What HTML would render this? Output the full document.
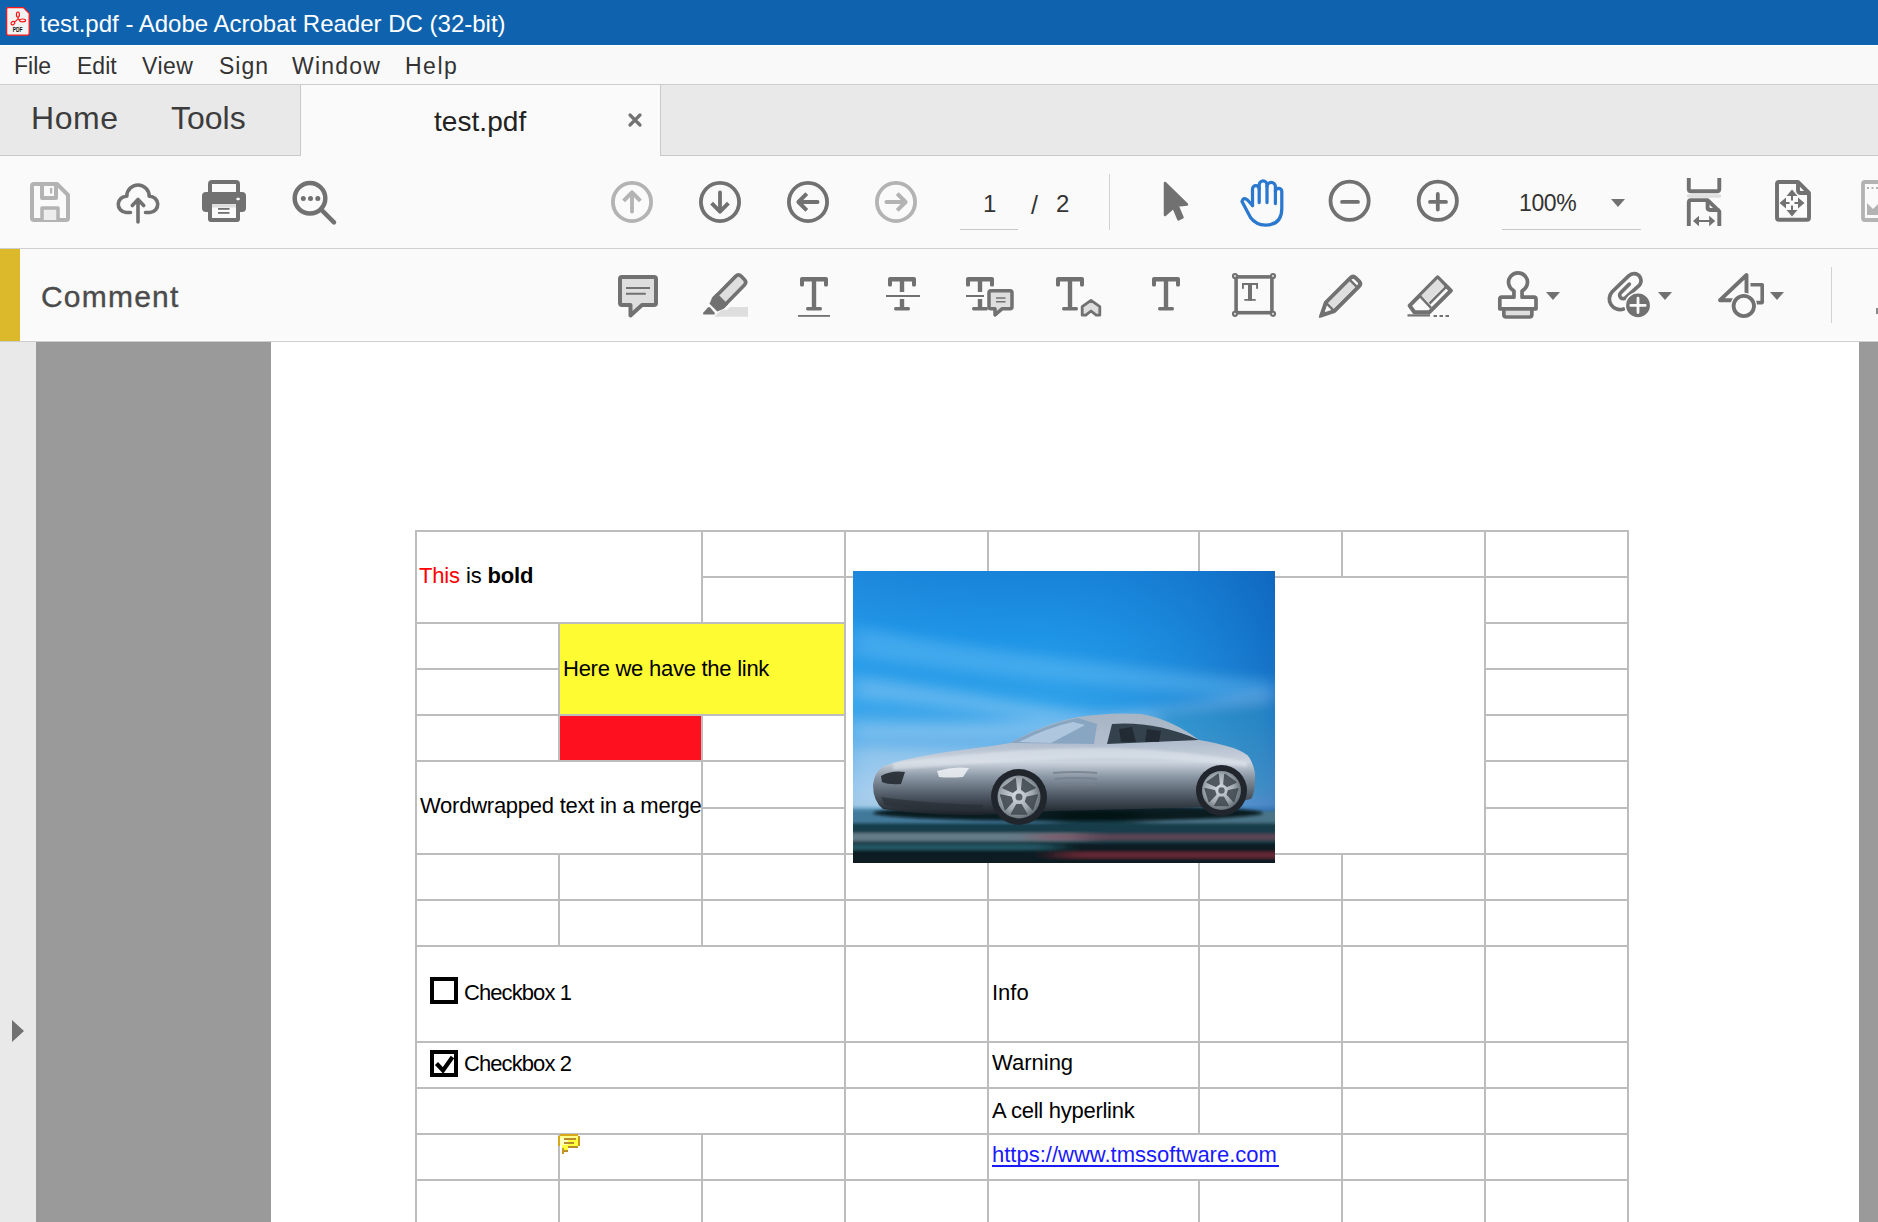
<!DOCTYPE html>
<html><head><meta charset="utf-8"><title>test.pdf - Adobe Acrobat Reader DC</title>
<style>
*{margin:0;padding:0;box-sizing:border-box}
html,body{width:1878px;height:1222px;overflow:hidden;background:#fafafa;font-family:"Liberation Sans",sans-serif}
.a{position:absolute}
.t{position:absolute;white-space:nowrap;line-height:1}
svg{position:absolute;overflow:visible}
.g{position:absolute;background:#bdbdbd}
</style></head><body>
<!-- title bar -->
<div class="a" style="left:0;top:0;width:1878px;height:45px;background:#0f63ae"></div>
<div class="a" style="left:0;top:45px;width:1878px;height:1px;background:#ffffff"></div>
<svg style="left:0;top:0" width="40" height="45">
<path d="M8.2 7.6 H23.4 L29.2 13.4 V33.4 Q29.2 35.2 27.4 35.2 H8.2 Q6.6 35.2 6.6 33.6 V9.2 Q6.6 7.6 8.2 7.6 Z" fill="#f3f3f3" stroke="#ff1616" stroke-width="1.3"/>
<g fill="none" stroke="#ff1010" stroke-width="1.15">
<ellipse cx="17.9" cy="14.6" rx="1.5" ry="2.6"/>
<ellipse cx="22.6" cy="20.4" rx="3" ry="1.4"/>
<ellipse cx="12.9" cy="23.1" rx="2" ry="1.6" transform="rotate(-30 12.9 23.1)"/>
<path d="M18 17.2 Q17.6 19.5 19.6 20.2 M17.6 19.4 Q16 21 14.3 22"/>
</g>
<text x="12.8" y="31.9" font-family="Liberation Sans" font-weight="bold" font-size="6.6" fill="#111" textLength="9.8" lengthAdjust="spacingAndGlyphs">PDF</text>
</svg>
<div id="title" class="t" style="left:40px;top:11.5px;font-size:24px;color:#fff">test.pdf - Adobe Acrobat Reader DC (32-bit)</div>
<!-- menu bar -->
<div class="a" style="left:0;top:46px;width:1878px;height:38px;background:#f9f9f9"></div>
<div class="a" style="left:0;top:84px;width:1878px;height:1px;background:#cdcdcd"></div>
<div id="m1" class="t" style="left:14px;top:55px;font-size:23px;color:#333">File</div>
<div id="m2" class="t" style="left:77px;top:55px;font-size:23px;color:#333">Edit</div>
<div id="m3" class="t" style="left:142px;top:55px;font-size:23px;color:#333;letter-spacing:0.5px">View</div>
<div id="m4" class="t" style="left:219px;top:55px;font-size:23px;color:#333;letter-spacing:1px">Sign</div>
<div id="m5" class="t" style="left:292px;top:55px;font-size:23px;color:#333;letter-spacing:1.2px">Window</div>
<div id="m6" class="t" style="left:405px;top:55px;font-size:23px;color:#333;letter-spacing:1.5px">Help</div>
<!-- tab bar -->
<div class="a" style="left:0;top:85px;width:1878px;height:70px;background:#e9e9e9"></div>
<div class="a" style="left:0;top:155px;width:1878px;height:1px;background:#c9c9c9"></div>
<div class="a" style="left:300px;top:85px;width:1px;height:71px;background:#c9c9c9"></div>
<div class="a" style="left:660px;top:85px;width:1px;height:71px;background:#c9c9c9"></div>
<div class="a" style="left:301px;top:85px;width:359px;height:71px;background:#fafafa"></div>
<div id="tab1" class="t" style="left:31px;top:102px;font-size:32px;letter-spacing:0.6px;color:#3c3c3c">Home</div>
<div id="tab2" class="t" style="left:171px;top:102px;font-size:32px;color:#3c3c3c">Tools</div>
<div id="tab3" class="t" style="left:434px;top:108px;font-size:28px;letter-spacing:0.05px;color:#222">test.pdf</div>
<!-- toolbar -->
<div class="a" style="left:0;top:156px;width:1878px;height:92px;background:#fafafa"></div>
<div class="a" style="left:0;top:248px;width:1878px;height:1px;background:#cfcfcf"></div>
<!-- comment bar -->
<div class="a" style="left:0;top:249px;width:1878px;height:91px;background:#fafafa"></div>
<div class="a" style="left:0;top:249px;width:20px;height:92px;background:#dcb92b"></div>
<div class="a" style="left:20px;top:340px;width:1858px;height:1px;background:#ffffff"></div>
<div class="a" style="left:0;top:341px;width:1878px;height:1px;background:#cdcdcd"></div>
<div id="comment" class="t" style="left:41px;top:281.5px;font-size:30px;color:#4b4b4b;letter-spacing:1.2px;-webkit-text-stroke:0.35px #4b4b4b">Comment</div>
<svg style="left:0;top:0" width="1878" height="342" viewBox="0 0 1878 342">
<defs>
<path id="T" d="M0 2 Q0 0 2 0 H26 Q28 0 28 2 V8 Q28 9.6 26.5 9.6 H25.5 Q24 9.6 24 8 V4.5 H16.2 V30 H20.5 Q22 30 22 31.8 Q22 33.6 20.5 33.6 H7.5 Q6 33.6 6 31.8 Q6 30 7.5 30 H11.8 V4.5 H4 V8 Q4 9.6 2.5 9.6 H1.5 Q0 9.6 0 8 Z"/>
</defs>
<!-- save (disabled) -->
<g fill="none" stroke="#b3b3b3" stroke-width="4" stroke-linejoin="round">
<path d="M34 184 H57 L68 195 V218 Q68 220 66 220 H34 Q32 220 32 218 V186 Q32 184 34 184 Z"/>
<path d="M42 184 V198 H56 V184"/>
<path d="M42 220 V208 H58 V220" fill="#ededed" stroke-width="3.5"/>
</g>
<rect x="50" y="188" width="2.2" height="5.5" fill="#b3b3b3"/>
<!-- cloud upload -->
<g fill="none" stroke="#717171" stroke-width="3.6" stroke-linecap="round" stroke-linejoin="round">
<path d="M130.5 212.5 H126 A8 8 0 0 1 126.8 196.2 A11.2 11.2 0 0 1 149.2 196.2 A8 8 0 0 1 150 212.5 H145.5"/>
<path d="M138 222 V199.5 M132.3 205.5 L138 199.5 L143.7 205.5"/>
</g>
<!-- printer -->
<g fill="#717171">
<rect x="210" y="182" width="28" height="15" rx="2" fill="none" stroke="#717171" stroke-width="4"/>
<rect x="202" y="192" width="44" height="20" rx="4"/>
<rect x="208" y="203.5" width="32" height="18.5" rx="3"/>
<rect x="212" y="204" width="24" height="14" fill="#fafafa"/>
<rect x="212" y="204" width="24" height="3.5" fill="#dedede"/>
<rect x="218" y="208" width="11.5" height="1.8"/>
<rect x="218" y="212" width="11.5" height="1.8"/>
<rect x="236.4" y="197.8" width="3.4" height="2.4" rx="1" fill="#fafafa"/>
</g>
<!-- search -->
<g fill="none" stroke="#717171" stroke-width="4.5" stroke-linecap="round">
<circle cx="310" cy="198.3" r="15.3"/>
<path d="M322.5 210.8 L334 222.3"/>
</g>
<g fill="#717171"><circle cx="303.3" cy="198.4" r="2.5"/><circle cx="310.5" cy="198.4" r="2.5"/><circle cx="317.8" cy="198.4" r="2.5"/></g>
<!-- nav circles -->
<g fill="none" stroke-width="3.8">
<g stroke="#b3b3b3"><circle cx="632" cy="202" r="19.1"/><path d="M632 211.6 V194" stroke-linecap="round"/><path d="M623.6 200.8 L632 192.4 L640.4 200.8" stroke-width="4" stroke-linejoin="round"/></g>
<g stroke="#717171"><circle cx="720" cy="202" r="19.1"/><path d="M720 192.4 V210" stroke-linecap="round"/><path d="M711.6 203.2 L720 211.6 L728.4 203.2" stroke-width="4" stroke-linejoin="round"/></g>
<g stroke="#717171"><circle cx="808" cy="202" r="19.1"/><path d="M817.6 202 H800" stroke-linecap="round"/><path d="M806.8 193.6 L798.4 202 L806.8 210.4" stroke-width="4" stroke-linejoin="round"/></g>
<g stroke="#b3b3b3"><circle cx="896" cy="202" r="19.1"/><path d="M886.4 202 H904" stroke-linecap="round"/><path d="M897.2 193.6 L905.6 202 L897.2 210.4" stroke-width="4" stroke-linejoin="round"/></g>
</g>
<rect x="960" y="229" width="58" height="1" fill="#c8c8c8"/>
<rect x="1109" y="174" width="1" height="56" fill="#d2d2d2"/>
<!-- select arrow -->
<path d="M1165 183 L1187 204.5 L1177.5 205.5 L1182.5 217.5 L1178.5 219.5 L1173.5 207.5 L1165 215 Z" fill="#717171" stroke="#717171" stroke-width="2.5" stroke-linejoin="round"/>
<!-- hand -->
<g fill="none" stroke="#2b78cf" stroke-width="3.25" stroke-linecap="round" stroke-linejoin="round">
<path d="M1252.5 205.5 L1247.5 200 Q1243.5 196.5 1242 201.5 L1250.5 217.5 Q1256 225 1265.5 225 Q1281.8 225 1281.8 208.5 V191.5 A3.2 3.2 0 0 0 1275.4 191.5"/>
<path d="M1252.5 205.5 V189 A3.35 3.35 0 0 1 1259.2 189 V202.5"/>
<path d="M1259.2 189 V184.8 A3.9 3.9 0 0 1 1267 184.8 V202.5"/>
<path d="M1267 186.5 A4.2 4.2 0 0 1 1275.4 186.5 V203.5"/>
</g>
<!-- zoom out / in -->
<g fill="none" stroke="#717171" stroke-width="3.8" stroke-linecap="round">
<circle cx="1349.6" cy="200.8" r="19.1"/><path d="M1342 201.9 H1358"/>
<circle cx="1437.8" cy="200.8" r="19.1"/><path d="M1430 201.9 H1446 M1437.8 194 V209.6"/>
</g>
<path d="M1611 199 H1625 L1618 207 Z" fill="#717171"/>
<rect x="1502" y="229" width="139" height="1" fill="#c8c8c8"/>
<!-- fit width -->
<g fill="none" stroke="#717171" stroke-width="3.9">
<path d="M1688.8 178 V189 Q1688.8 191.3 1691 191.3 H1717 Q1719.3 191.3 1719.3 189 V178"/>
<path d="M1688.8 226 V202.5 Q1688.8 200.1 1691 200.1 H1707.6 L1719.3 211.3 V226" stroke-linejoin="round"/>
<path d="M1707.6 200.1 V207.6 Q1707.6 210 1710 210 H1719.3"/>
<path d="M1697 221 H1711" stroke-width="2"/>
</g>
<rect x="1686.8" y="194.3" width="34.4" height="3.4" rx="1.7" fill="#dedede"/>
<path d="M1693 221 L1699 215.8 V226.2 Z M1715.2 221 L1709.2 215.8 V226.2 Z" fill="#717171"/>
<!-- fit page -->
<g fill="none" stroke="#717171" stroke-width="3.9" stroke-linejoin="round">
<path d="M1779 182 H1798 L1809 193 V217.7 Q1809 219.7 1807 219.7 H1779 Q1777 219.7 1777 217.7 V184 Q1777 182 1779 182 Z"/>
<path d="M1798 182 V190 Q1798 193 1801 193 H1809"/>
<path d="M1792 195 V200.5 M1792 205.5 V211 M1785 203 H1789.5 M1794.5 203 H1799" stroke-width="2"/>
</g>
<path d="M1792 189.5 L1786.5 196 H1797.5 Z M1792 216.5 L1786.5 210 H1797.5 Z M1779.5 203 L1786 197.5 V208.5 Z M1804.5 203 L1798 197.5 V208.5 Z" fill="#717171"/>
<!-- partial icon -->
<g fill="none" stroke="#b3b3b3" stroke-width="3.8"><path d="M1880 182 H1865 Q1863 182 1863 184 V218 Q1863 220 1865 220 H1880"/></g>
<path d="M1867 187 h2 v2 h-2z M1871.5 187 h2 v2 h-2z M1876 187 h2 v2 h-2z" fill="#b3b3b3"/>
<path d="M1867 203 L1873 209 L1878 204 V215 H1867 Z" fill="#b3b3b3"/>

<!-- ===== comment toolbar ===== -->
<!-- sticky note -->
<path d="M622 277 H654 Q656 277 656 279 V303 Q656 305 654 305 H642 L630.5 315.5 V305 H622 Q620 305 620 303 V279 Q620 277 622 277 Z" fill="#dedede" stroke="#717171" stroke-width="4" stroke-linejoin="round"/>
<path d="M626 288 H650 M626 293.8 H645.8" stroke="#717171" stroke-width="2"/>
<!-- highlighter -->
<path d="M714.2 316.8 L721.8 309.8 H727.2 L730 307 H748 V316.8 Z" fill="#dedede"/>
<g transform="translate(728.75 292.15) rotate(-45.4)">
<path d="M-13.2 -6.2 H16.05 Q20.05 -6.2 20.05 -2.2 V2.2 Q20.05 6.2 16.05 6.2 H-13.2 Z" fill="#dedede" stroke="#717171" stroke-width="3.6"/>
<path d="M-9 -8 V8 H-15.5 L-21.85 5.5 V-5.5 L-15.5 -8 Z" fill="#717171"/>
</g>
<path d="M704.2 314.6 Q702.4 314.6 703.4 312.6 L707.6 307.8 Q709 306.4 710.4 307.8 L714.4 312.4 Q715.6 314.6 713.4 314.6 Z" fill="#717171"/>
<!-- T underline -->
<g fill="#717171">
<use href="#T" x="800" y="277"/>
<rect x="798" y="315" width="32" height="1.8"/>
<!-- T strike -->
<use href="#T" x="888" y="277"/>
</g>
<rect x="880" y="292" width="40" height="7" fill="#fafafa"/>
<rect x="886" y="295" width="34" height="2" fill="#717171"/>
<!-- T replace -->
<use href="#T" x="966" y="277" fill="#717171"/>
<rect x="960" y="292" width="26" height="7" fill="#fafafa"/>
<rect x="966" y="295" width="18" height="2" fill="#717171"/>
<path d="M991 290.8 H1010 Q1012 290.8 1012 292.8 V306.8 Q1012 308.8 1010 308.8 H1002 L995 314.8 V308.8 H991 Q989 308.8 989 306.8 V292.8 Q989 290.8 991 290.8 Z" fill="#dedede" stroke="#717171" stroke-width="3.5" stroke-linejoin="round"/>
<path d="M996 298 H1005.5 M996 301.8 H1005.5" stroke="#717171" stroke-width="1.6"/>
<!-- T insert -->
<use href="#T" x="1056" y="277" fill="#717171"/>
<path d="M1082.2 315.2 V306.6 L1091 300.4 L1099.8 306.6 V315.2 H1096.2 L1091 311 L1085.8 315.2 Z" fill="#dedede" stroke="#717171" stroke-width="2.8" stroke-linejoin="round"/>
<!-- T plain -->
<use href="#T" x="1152" y="277" fill="#717171"/>
<!-- text box -->
<rect x="1236.1" y="276.9" width="35.8" height="35.8" fill="none" stroke="#717171" stroke-width="3.6"/>
<g fill="#dedede" stroke="#717171" stroke-width="2">
<circle cx="1235" cy="276" r="2.1"/><circle cx="1273" cy="276" r="2.1"/><circle cx="1235" cy="313.8" r="2.1"/><circle cx="1273" cy="313.8" r="2.1"/>
</g>
<g fill="#717171">
<rect x="1242" y="283.1" width="16" height="2" rx="0.6"/>
<rect x="1242" y="283.1" width="1.9" height="5.7"/>
<rect x="1256.1" y="283.1" width="1.9" height="5.7"/>
<rect x="1248" y="283.1" width="4" height="17.6"/>
<rect x="1244.2" y="298.9" width="11.6" height="1.9" rx="0.6"/>
</g>
<!-- pencil -->
<g transform="translate(1339.2 297.6) rotate(-45)">
<path d="M-13 -6 H22 Q25.6 -6 25.6 -2.4 V2.4 Q25.6 6 22 6 H-13 L-25.2 0 Z" fill="#fafafa" stroke="#717171" stroke-width="4" stroke-linejoin="round"/>
<rect x="-13" y="-4" width="33" height="8" fill="#dedede"/>
<path d="M-13 -6 V6 M20 -6 V6" stroke="#717171" stroke-width="2.4"/>
<path d="M-21 -2.2 L-27.4 0 L-21 2.2 Z" fill="#717171" stroke="#717171" stroke-width="2" stroke-linejoin="round"/>
</g>
<!-- eraser -->
<path d="M1437.6 277.4 L1450.9 290.6 L1429.4 312.2 H1414.4 L1409.6 305.6 Z" fill="#fafafa" stroke="#717171" stroke-width="4" stroke-linejoin="round"/>
<path d="M1421.2 295.4 L1437.6 279 L1444.2 286.1 L1428.3 302 Z" fill="#dedede"/>
<path d="M1420.3 296.3 L1431 307.8 M1429.5 303.5 L1446.3 286.7" stroke="#717171" stroke-width="2.5"/>
<path d="M1407.5 315.4 H1430" stroke="#717171" stroke-width="2.2"/>
<path d="M1433.6 316 H1437 M1439.5 316 H1443 M1445.5 316 H1449" stroke="#717171" stroke-width="1.9"/>
<!-- stamp -->
<rect x="1505.7" y="310.6" width="24.3" height="4.5" fill="#dedede"/>
<g fill="none" stroke="#717171" stroke-width="3.7" stroke-linejoin="round">
<path d="M1513.95 297.2 V290.8 A9.45 9.45 0 1 1 1522.05 290.8 V297.2 H1534 Q1536 297.2 1536 299.2 V308.8 H1499.8 V299.2 Q1499.8 297.2 1501.8 297.2 Z"/>
<path d="M1503.85 308.8 V314.5 Q1503.85 317 1506.35 317 H1529.35 Q1531.85 317 1531.85 314.5 V308.8"/>
</g>
<path d="M1546 292 H1560 L1553 300 Z" fill="#717171"/>
<!-- attach -->
<path d="M1623.6 308.9 A10.6 10.6 0 0 1 1612.2 291.7 L1628.9 275.7 A7.1 7.1 0 0 1 1633.9 273.6 A7.1 7.1 0 0 1 1638.9 285.7 L1625.7 297.7 A3.5 3.5 0 0 1 1620.73 297.67 A3.5 3.5 0 0 1 1620.7 292.7 L1629.3 284.1" fill="none" stroke="#717171" stroke-width="3.7" stroke-linecap="round"/>
<circle cx="1638" cy="305.4" r="12.7" fill="#717171" stroke="#fafafa" stroke-width="1.6"/>
<path d="M1638 298.2 V312.6 M1630.8 305.4 H1645.2" stroke="#fafafa" stroke-width="2.8" stroke-linecap="round"/>
<path d="M1658 292 H1672 L1665 300 Z" fill="#717171"/>
<!-- shapes -->
<g fill="none" stroke="#717171" stroke-width="3.6" stroke-linejoin="round">
<path d="M1746.5 275 V300.2 H1720 Z" stroke-width="3.9"/>
<path d="M1750.5 284.8 H1762.2 V302.6 H1756"/>
<circle cx="1743.8" cy="306" r="10.2" fill="#fafafa" stroke="#fafafa" stroke-width="6.2"/>
<circle cx="1743.8" cy="306" r="10.2" fill="none" stroke-width="3.8"/>
</g>
<path d="M1770 292 H1784 L1777 300 Z" fill="#717171"/>
<rect x="1831" y="267" width="1" height="56" fill="#d2d2d2"/>
</svg>

<div id="pg1" class="t" style="left:983px;top:192px;font-size:24px;color:#333">1</div>
<div id="pg2" class="t" style="left:1031px;top:193px;font-size:25px;color:#333">/</div>
<div id="pg3" class="t" style="left:1056px;top:192px;font-size:24px;color:#333">2</div>
<div id="zoom" class="t" style="left:1519px;top:192px;font-size:23px;color:#333;letter-spacing:-0.4px">100%</div>
<div class="a" style="left:628px;top:113px;width:14px;height:14px"><svg width="14" height="14" style="left:0;top:0"><path d="M2 2 L12 12 M12 2 L2 12" stroke="#737373" stroke-width="3.2" stroke-linecap="round"/></svg></div>
<!-- doc area -->
<div class="a" style="left:0;top:342px;width:36px;height:880px;background:#e9e9e9"></div>
<div class="a" style="left:36px;top:342px;width:235px;height:880px;background:#9a9a9a"></div>
<div class="a" style="left:271px;top:342px;width:1588px;height:880px;background:#ffffff"></div>
<div class="a" style="left:1859px;top:342px;width:19px;height:880px;background:#9a9a9a"></div>
<svg style="left:0;top:0" width="1" height="1"><path d="M12 1020 L24 1031 L12 1042 Z" fill="#717171"/></svg>

<!-- GRID -->
<div id="grid">
<div class="g" style="left:415px;top:530px;width:2px;height:692px"></div>
<div class="g" style="left:558px;top:622px;width:2px;height:140px"></div>
<div class="g" style="left:558px;top:853px;width:2px;height:94px"></div>
<div class="g" style="left:558px;top:1133px;width:2px;height:89px"></div>
<div class="g" style="left:701px;top:530px;width:2px;height:94px"></div>
<div class="g" style="left:701px;top:714px;width:2px;height:233px"></div>
<div class="g" style="left:701px;top:1133px;width:2px;height:89px"></div>
<div class="g" style="left:844px;top:530px;width:2px;height:692px"></div>
<div class="g" style="left:987px;top:530px;width:2px;height:48px"></div>
<div class="g" style="left:987px;top:853px;width:2px;height:369px"></div>
<div class="g" style="left:1198px;top:530px;width:2px;height:48px"></div>
<div class="g" style="left:1198px;top:853px;width:2px;height:282px"></div>
<div class="g" style="left:1198px;top:1179px;width:2px;height:43px"></div>
<div class="g" style="left:1341px;top:530px;width:2px;height:48px"></div>
<div class="g" style="left:1341px;top:853px;width:2px;height:369px"></div>
<div class="g" style="left:1484px;top:530px;width:2px;height:692px"></div>
<div class="g" style="left:1627px;top:530px;width:2px;height:692px"></div>
<div class="g" style="left:415px;top:530px;width:1214px;height:2px"></div>
<div class="g" style="left:701px;top:576px;width:928px;height:2px"></div>
<div class="g" style="left:415px;top:622px;width:431px;height:2px"></div>
<div class="g" style="left:1484px;top:622px;width:145px;height:2px"></div>
<div class="g" style="left:415px;top:668px;width:145px;height:2px"></div>
<div class="g" style="left:1484px;top:668px;width:145px;height:2px"></div>
<div class="g" style="left:415px;top:714px;width:431px;height:2px"></div>
<div class="g" style="left:1484px;top:714px;width:145px;height:2px"></div>
<div class="g" style="left:415px;top:760px;width:431px;height:2px"></div>
<div class="g" style="left:1484px;top:760px;width:145px;height:2px"></div>
<div class="g" style="left:701px;top:807px;width:145px;height:2px"></div>
<div class="g" style="left:1484px;top:807px;width:145px;height:2px"></div>
<div class="g" style="left:415px;top:853px;width:1214px;height:2px"></div>
<div class="g" style="left:415px;top:899px;width:1214px;height:2px"></div>
<div class="g" style="left:415px;top:945px;width:1214px;height:2px"></div>
<div class="g" style="left:415px;top:1041px;width:1214px;height:2px"></div>
<div class="g" style="left:415px;top:1087px;width:1214px;height:2px"></div>
<div class="g" style="left:415px;top:1133px;width:1214px;height:2px"></div>
<div class="g" style="left:415px;top:1179px;width:1214px;height:2px"></div>
</div>
<!-- CELLS -->
<svg style="left:853px;top:571px;overflow:hidden" width="422" height="292" viewBox="0 0 422 292">
<defs>
<linearGradient id="sky" x1="0" y1="0" x2="0" y2="1">
<stop offset="0" stop-color="#1882d8"/>
<stop offset="0.22" stop-color="#1e94e6"/>
<stop offset="0.45" stop-color="#30a2ea"/>
<stop offset="0.6" stop-color="#6ab4ea"/>
<stop offset="0.74" stop-color="#9cc8ec"/>
<stop offset="0.8" stop-color="#a8cae4"/>
<stop offset="0.83" stop-color="#4a88ac"/>
<stop offset="0.88" stop-color="#1a4050"/>
<stop offset="1" stop-color="#08161c"/>
</linearGradient>
<linearGradient id="skyR" x1="0" y1="0" x2="1" y2="0">
<stop offset="0" stop-color="#40a8f0" stop-opacity="0.15"/>
<stop offset="0.45" stop-color="#1a88dc" stop-opacity="0"/>
<stop offset="1" stop-color="#0a56ae" stop-opacity="0.6"/>
</linearGradient>
<linearGradient id="body" x1="0" y1="0" x2="0" y2="1">
<stop offset="0" stop-color="#a6b4c4"/>
<stop offset="0.3" stop-color="#b2bece"/>
<stop offset="0.48" stop-color="#ccd4de"/>
<stop offset="0.62" stop-color="#8c98a6"/>
<stop offset="0.8" stop-color="#525c68"/>
<stop offset="1" stop-color="#1a2026"/>
</linearGradient>
<radialGradient id="rim" cx="0.45" cy="0.45" r="0.6">
<stop offset="0" stop-color="#d6dce2"/>
<stop offset="0.6" stop-color="#a2aab2"/>
<stop offset="1" stop-color="#5a626a"/>
</radialGradient>
<filter id="b2" filterUnits="userSpaceOnUse" x="-50" y="-50" width="522" height="392"><feGaussianBlur stdDeviation="1.8"/></filter>
<filter id="b4" filterUnits="userSpaceOnUse" x="-50" y="-50" width="522" height="392"><feGaussianBlur stdDeviation="10 6"/></filter>
<filter id="b5" filterUnits="userSpaceOnUse" x="-50" y="-50" width="522" height="392"><feGaussianBlur stdDeviation="14 1.6"/></filter>
<filter id="b1" filterUnits="userSpaceOnUse" x="-50" y="-50" width="522" height="392"><feGaussianBlur stdDeviation="0.9"/></filter>
</defs>
<rect width="422" height="292" fill="url(#sky)"/>
<rect width="422" height="242" fill="url(#skyR)"/>
<g filter="url(#b4)" opacity="0.4">
<path d="M0 55 Q150 85 422 110 L422 130 Q150 108 0 85 Z" fill="#6cc0f4"/>
<path d="M0 150 Q200 160 420 118 L420 136 Q200 176 0 168 Z" fill="#a8d4f4"/>
<path d="M0 105 Q100 118 260 146 L260 160 Q100 136 0 128 Z" fill="#a0d0f4"/>
<path d="M300 140 L422 130 L422 225 L320 225 Z" fill="#2a94bc"/>
<path d="M0 175 L140 180 L140 235 L0 235 Z" fill="#c4dcee"/>
</g>
<g filter="url(#b5)">
<rect x="-40" y="240" width="502" height="52" fill="#143c4a"/>
<rect x="-40" y="238" width="240" height="14" fill="#4a84a8" opacity="0.85"/>
<rect x="290" y="240" width="172" height="12" fill="#6a98b0" opacity="0.6"/>
<rect x="-40" y="262" width="270" height="8" fill="#9aa6b2" opacity="0.6"/>
<rect x="180" y="263" width="282" height="6" fill="#8a4a5c" opacity="0.6"/>
<rect x="-40" y="272" width="502" height="20" fill="#0a1c22"/>
<rect x="-40" y="273" width="240" height="6" fill="#2e6a7a" opacity="0.75"/>
<rect x="210" y="281" width="252" height="6" fill="#7a2a3c" opacity="0.8"/>
<rect x="-40" y="288" width="502" height="30" fill="#0a1c22"/>
</g>
<ellipse cx="215" cy="242" rx="195" ry="8" fill="#050c10" opacity="0.85" filter="url(#b2)"/>
<path d="M20 214 Q22 198 34 194 Q60 185 123 177 Q140 175 157 172 Q192 152 225 146 Q258 141 288 143 Q318 148 346 169 Q388 176 396 186 Q403 198 402 208 Q402 222 398 228 L360 236 L200 240 L126 244 Q70 244 30 238 Q20 230 20 214 Z" fill="url(#body)"/>
<path d="M40 192 Q150 176 260 177 Q340 180 394 191 L394 196 Q330 187 250 187 Q150 189 40 199 Z" fill="#e4eaf0" opacity="0.5" filter="url(#b1)"/>
<path d="M157 172 Q192 153 225 147 L244 153 L241 173 Z" fill="#88a6c2"/>
<path d="M166 171 Q196 156 220 151 L232 154 L198 172 Z" fill="#c0d6ea" opacity="0.7"/>
<path d="M254 173 L259 153 Q302 150 346 169 Z" fill="#34424e"/>
<path d="M266 158 L279 156 L283 171 L268 171 Z M294 158 L308 160 L306 171 L292 171 Z" fill="#1e262e" opacity="0.8"/>
<path d="M28 205 Q38 199 52 201 L48 213 Q36 214 29 211 Z" fill="#242a30" opacity="0.9"/>
<path d="M84 200 Q100 195 116 197 L110 206 Q96 207 86 206 Z" fill="#eef2f4" opacity="0.85"/>
<path d="M28 226 Q70 232 130 234 L128 240 Q70 240 32 234 Z" fill="#2a3038" opacity="0.7"/>
<path d="M200 202 Q222 200 244 202 M202 208 Q222 206 244 208 M205 214 Q222 212 244 214" stroke="#76808c" stroke-width="1.8" fill="none" opacity="0.8"/>
<circle cx="166" cy="226" r="28" fill="#20262c"/>
<circle cx="368.5" cy="219.5" r="25.5" fill="#20262c"/>
<circle cx="166" cy="226" r="21.5" fill="url(#rim)"/>
<circle cx="368.5" cy="219.5" r="19.5" fill="url(#rim)"/>
<g fill="#3e464e" opacity="0.85" stroke="#3e464e" stroke-width="1.5" stroke-linejoin="round">
<path d="M168.7 218.5 L169.8 207.9 L182.0 216.8 L172.3 221.1 Z M174.0 226.3 L184.4 224.1 L179.7 238.4 L172.6 230.5 Z M168.2 233.7 L173.5 242.9 L158.5 242.9 L163.8 233.7 Z M159.4 230.5 L152.3 238.4 L147.6 224.1 L158.0 226.3 Z M159.7 221.1 L150.0 216.8 L162.2 207.9 L163.3 218.5 Z"/>
<path d="M370.9 212.9 L371.9 203.4 L382.8 211.2 L374.0 215.2 Z M375.5 219.7 L384.9 217.8 L380.8 230.5 L374.3 223.4 Z M370.4 226.2 L375.2 234.6 L361.8 234.6 L366.6 226.2 Z M362.7 223.4 L356.2 230.5 L352.1 217.8 L361.5 219.7 Z M363.0 215.2 L354.2 211.2 L365.1 203.4 L366.1 212.9 Z"/>
</g>
<circle cx="166" cy="226" r="3.5" fill="#5a626a"/><circle cx="368.5" cy="219.5" r="3.2" fill="#5a626a"/>
</svg>

<div class="a" style="left:560px;top:624px;width:284px;height:90px;background:#fffb33"></div>
<div class="a" style="left:560px;top:716px;width:141px;height:44px;background:#ff101e"></div>

<div class="t" style="left:419px;top:565px;font-size:22px;color:#000;letter-spacing:-0.15px"><span style="color:#ff0000">This</span> is <b>bold</b></div>
<div class="t" style="left:563px;top:658px;font-size:22px;color:#000;letter-spacing:-0.26px">Here we have the link</div>
<div class="t" style="left:420px;top:795px;font-size:22px;color:#000;letter-spacing:-0.25px">Wordwrapped text in a merge</div>
<div class="t" style="left:464px;top:982px;font-size:22px;color:#000;letter-spacing:-0.92px">Checkbox 1</div>
<div class="t" style="left:464px;top:1053px;font-size:22px;color:#000;letter-spacing:-0.92px">Checkbox 2</div>
<div class="t" style="left:992px;top:982px;font-size:22px;color:#000">Info</div>
<div class="t" style="left:992px;top:1052px;font-size:22px;color:#000">Warning</div>
<div class="t" style="left:992px;top:1100px;font-size:22px;color:#000;letter-spacing:-0.27px">A cell hyperlink</div>
<div class="t" style="left:992px;top:1144px;font-size:22px;color:#1a1aff">https://www.tmssoftware.com</div>
<div class="a" style="left:992px;top:1165px;width:287px;height:2px;background:#1a1aff"></div>

<div class="a" style="left:430px;top:977px;width:28px;height:27px;border:4px solid #000"></div>
<div class="a" style="left:430px;top:1050px;width:28px;height:27px;border:4px solid #000"></div>
<svg style="left:0;top:0" width="1" height="1"><path d="M436.5 1063.5 L443 1070.5 L452.5 1057" fill="none" stroke="#000" stroke-width="4.2" stroke-linecap="butt" stroke-linejoin="miter"/></svg>
<svg style="left:0;top:0" width="1" height="1" shape-rendering="crispEdges">
<rect x="560" y="1134" width="18" height="2" fill="#d9a81a"/>
<rect x="558" y="1136" width="2" height="10" fill="#d9a81a"/>
<rect x="578" y="1136" width="1.5" height="10" fill="#c8981c"/>
<rect x="560" y="1136" width="18" height="10" fill="#ffff3a"/>
<rect x="560" y="1136" width="8" height="10" fill="#ffffc0"/>
<rect x="560" y="1136" width="18" height="2" fill="#ffff90"/>
<rect x="564" y="1138" width="12" height="2" fill="#b88c2c"/>
<rect x="564" y="1142" width="10" height="2" fill="#b88c2c"/>
<rect x="562" y="1145" width="6" height="5" fill="#ffff3a"/>
<rect x="568" y="1146" width="10" height="2" fill="#b88c2c"/>
<rect x="562" y="1148" width="2" height="6" fill="#c8981c"/>
<rect x="564" y="1150" width="4" height="2" fill="#b88c2c"/>
</svg>
<div class="a" style="left:1876px;top:308px;width:2px;height:6px;background:#8a8a8a"></div>
</body></html>
